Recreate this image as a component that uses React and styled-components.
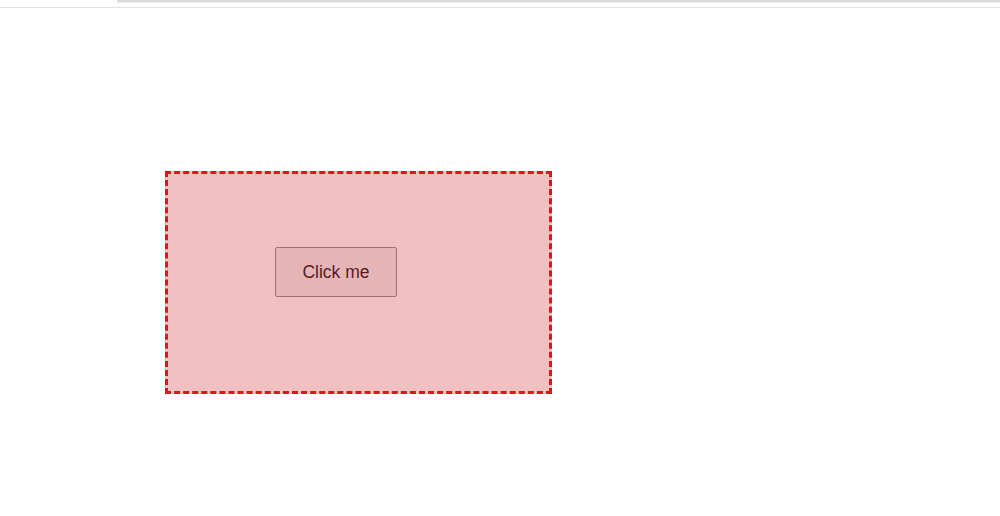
import React from "react";
import styled, { createGlobalStyle } from "styled-components";

const GlobalStyle = createGlobalStyle`
  html, body {
    margin: 0;
    padding: 0;
    background: #ffffff;
    font-family: "Liberation Sans", Arial, sans-serif;
  }
`;

export default function App() {
  return (
    <Page>
      <GlobalStyle />
      <TopStrip>
        <ScrollTrack />
      </TopStrip>
      <Rule />
      <Stage>
        <DropZone>
          <ActionButton type="button">Click me</ActionButton>
        </DropZone>
      </Stage>
    </Page>
  );
}

const Page = styled.div`
  width: 1000px;
  height: 516px;
  overflow: hidden;
  background: #ffffff;
`;

const TopStrip = styled.div`
  display: flex;
  justify-content: flex-end;
  height: 3px;
`;

const ScrollTrack = styled.div`
  width: 883px;
  height: 2px;
  background: #dcdcdc;
  border-bottom: 1px solid #efefef;
`;

const Rule = styled.div`
  margin-top: 4px;
  height: 1px;
  background: #e2e2e2;
`;

const Stage = styled.div`
  padding: 163px 0 0 165px;
`;

const DropZone = styled.div`
  box-sizing: border-box;
  width: 387px;
  height: 223px;
  padding: 73px 0 0 107px;
  background: #f1c0c1;
  border: 3px dashed #e0151b;
`;

const ActionButton = styled.button`
  box-sizing: border-box;
  width: 122px;
  height: 50px;
  padding-top: 2px;
  background: #e5b4b6;
  border: 1px solid #a07072;
  border-radius: 2px;
  color: #5b1c20;
  font-family: "Liberation Sans", Arial, sans-serif;
  font-size: 17.5px;
  cursor: pointer;
`;
